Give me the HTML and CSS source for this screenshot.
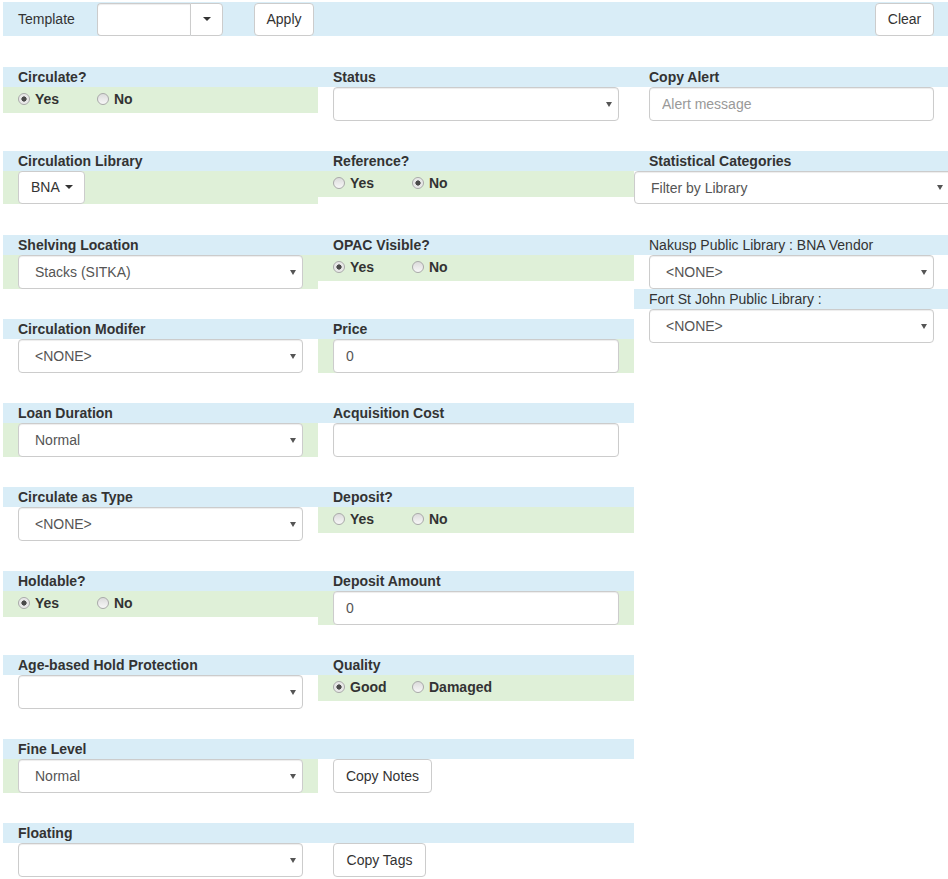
FILE: index.html
```html
<!DOCTYPE html>
<html lang="en">
<head>
<meta charset="utf-8">
<title>Item Attributes</title>
<link rel="stylesheet" href="styles.css">
</head>
<body>
<div class="page">
  <div class="toolbar">
    <span class="tpl-label">Template</span>
    <div class="input-group">
      <input class="ig-input" type="text">
      <button class="ig-btn" type="button"><span class="caret"></span></button>
    </div>
    <button class="btn btn-apply" type="button">Apply</button>
    <button class="btn btn-clear" type="button">Clear</button>
  </div>

  <div class="form">
    <div class="main">
      <div class="row">
        <div class="field">
          <div class="head">Circulate?</div>
          <div class="radios changed">
            <label class="opt"><input type="radio" name="circ" checked>Yes</label>
            <label class="opt"><input type="radio" name="circ">No</label>
          </div>
        </div>
        <div class="field">
          <div class="head">Status</div>
          <div class="body"><div class="select"><select><option></option></select></div></div>
        </div>
      </div>

      <div class="row">
        <div class="field">
          <div class="head">Circulation Library</div>
          <div class="body changed"><button class="btn btn-lib" type="button">BNA <span class="caret"></span></button></div>
        </div>
        <div class="field">
          <div class="head">Reference?</div>
          <div class="radios changed">
            <label class="opt"><input type="radio" name="ref">Yes</label>
            <label class="opt"><input type="radio" name="ref" checked>No</label>
          </div>
        </div>
      </div>

      <div class="row">
        <div class="field">
          <div class="head">Shelving Location</div>
          <div class="body changed"><div class="select"><select><option>Stacks (SITKA)</option></select></div></div>
        </div>
        <div class="field">
          <div class="head">OPAC Visible?</div>
          <div class="radios changed">
            <label class="opt"><input type="radio" name="opac" checked>Yes</label>
            <label class="opt"><input type="radio" name="opac">No</label>
          </div>
        </div>
      </div>

      <div class="row">
        <div class="field">
          <div class="head">Circulation Modifer</div>
          <div class="body"><div class="select"><select><option>&lt;NONE&gt;</option></select></div></div>
        </div>
        <div class="field">
          <div class="head">Price</div>
          <div class="body changed"><input class="text" type="text" value="0"></div>
        </div>
      </div>

      <div class="row">
        <div class="field">
          <div class="head">Loan Duration</div>
          <div class="body changed"><div class="select"><select><option>Normal</option></select></div></div>
        </div>
        <div class="field">
          <div class="head">Acquisition Cost</div>
          <div class="body"><input class="text" type="text" value=""></div>
        </div>
      </div>

      <div class="row">
        <div class="field">
          <div class="head">Circulate as Type</div>
          <div class="body"><div class="select"><select><option>&lt;NONE&gt;</option></select></div></div>
        </div>
        <div class="field">
          <div class="head">Deposit?</div>
          <div class="radios changed">
            <label class="opt"><input type="radio" name="dep">Yes</label>
            <label class="opt"><input type="radio" name="dep">No</label>
          </div>
        </div>
      </div>

      <div class="row">
        <div class="field">
          <div class="head">Holdable?</div>
          <div class="radios changed">
            <label class="opt"><input type="radio" name="hold" checked>Yes</label>
            <label class="opt"><input type="radio" name="hold">No</label>
          </div>
        </div>
        <div class="field">
          <div class="head">Deposit Amount</div>
          <div class="body changed"><input class="text" type="text" value="0"></div>
        </div>
      </div>

      <div class="row">
        <div class="field">
          <div class="head">Age-based Hold Protection</div>
          <div class="body"><div class="select"><select><option></option></select></div></div>
        </div>
        <div class="field">
          <div class="head">Quality</div>
          <div class="radios changed">
            <label class="opt"><input type="radio" name="qual" checked>Good</label>
            <label class="opt"><input type="radio" name="qual">Damaged</label>
          </div>
        </div>
      </div>

      <div class="row">
        <div class="field">
          <div class="head">Fine Level</div>
          <div class="body changed"><div class="select"><select><option>Normal</option></select></div></div>
        </div>
        <div class="field">
          <div class="head"></div>
          <div class="body"><button class="btn btn-notes" type="button">Copy Notes</button></div>
        </div>
      </div>

      <div class="row">
        <div class="field">
          <div class="head">Floating</div>
          <div class="body"><div class="select"><select><option></option></select></div></div>
        </div>
        <div class="field">
          <div class="head"></div>
          <div class="body"><button class="btn btn-tags" type="button">Copy Tags</button></div>
        </div>
      </div>
    </div>

    <div class="side">
      <div class="field side-block">
        <div class="head">Copy Alert</div>
        <div class="body"><input class="text" type="text" placeholder="Alert message"></div>
      </div>
      <div class="field side-block">
        <div class="head">Statistical Categories</div>
        <div class="body-flush"><div class="select select-wide"><select><option>Filter by Library</option></select></div></div>
      </div>
      <div class="field">
        <div class="head head-plain">Nakusp Public Library : BNA Vendor</div>
        <div class="body"><div class="select"><select><option>&lt;NONE&gt;</option></select></div></div>
      </div>
      <div class="field">
        <div class="head head-plain">Fort St John Public Library :</div>
        <div class="body"><div class="select"><select><option>&lt;NONE&gt;</option></select></div></div>
      </div>
    </div>
  </div>
</div>
</body>
</html>
```

FILE: styles.css
```css
html, body {
  margin: 0;
  padding: 0;
}
body {
  font-family: "Liberation Sans", Arial, Helvetica, sans-serif;
  font-size: 14px;
  color: #333;
  background: #fff;
  overflow: hidden;
}
* { box-sizing: border-box; }

.page {
  padding: 2px 0 0 3px;
  width: 949px;
}

/* toolbar */
.toolbar {
  display: flex;
  align-items: center;
  width: 945px;
  height: 34px;
  background: #d9edf7;
  padding: 0 14px 0 15px;
  margin-bottom: 31px;
}
.tpl-label {
  width: 79px;
  line-height: 20px;
}
.input-group {
  display: flex;
  height: 33px;
}
.ig-input {
  width: 93px;
  height: 33px;
  border: 1px solid #ccc;
  border-right: 0;
  border-radius: 4px 0 0 4px;
  box-shadow: inset 0 1px 1px rgba(0,0,0,.075);
  margin: 0;
  padding: 0 12px;
  font: inherit;
}
.ig-btn {
  width: 33px;
  height: 33px;
  border: 1px solid #ccc;
  border-radius: 0 4px 4px 0;
  background: #fff;
  margin: 0;
  padding: 0;
  display: flex;
  align-items: center;
  justify-content: center;
}
.caret {
  display: inline-block;
  width: 0;
  height: 0;
  border-top: 4px solid #333;
  border-left: 4px solid transparent;
  border-right: 4px solid transparent;
  vertical-align: middle;
}

.btn {
  height: 34px;
  border: 1px solid #ccc;
  border-radius: 4px;
  background: #fff;
  color: #333;
  font: inherit;
  font-size: 14px;
  padding: 0 12px;
  margin: 0;
  line-height: 32px;
  white-space: nowrap;
}
.toolbar .btn { height: 33px; line-height: 31px; }
.btn-apply { margin-left: 31px; width: 60px; padding: 0; }
.btn-clear { margin-left: auto; width: 59px; padding: 0; }
.btn-lib { width: 67px; height: 33px; line-height: 31px; padding: 0 0 0 12px; text-align: left; }
.btn-lib .caret { margin-left: 2px; margin-top: -2px; }
.btn-notes { width: 99px; padding: 0; }
.btn-tags { width: 93px; padding: 0; }

/* form */
.form {
  display: flex;
  align-items: flex-start;
}
.main { width: 631px; }
.row {
  display: grid;
  grid-template-columns: 315px 316px;
  align-items: start;
  min-height: 54px;
  margin-bottom: 30px;
}
.side { width: 315px; }
.side-block { min-height: 54px; margin-bottom: 30px; }

.head {
  height: 20px;
  line-height: 20px;
  padding: 0 15px;
  background: #d9edf7;
  font-weight: bold;
  white-space: nowrap;
}
.head-plain { font-weight: normal; }

.body { padding: 0 15px; }
.body-flush { padding: 0; }
.changed { background: #dff0d8; }

.radios {
  height: 26px;
  padding: 2px 15px 0;
  display: flex;
}
.opt {
  display: inline-flex;
  align-items: center;
  width: 79px;
  height: 20px;
  font-weight: bold;
  line-height: 20px;
}
.opt input {
  appearance: none;
  -webkit-appearance: none;
  width: 12px;
  height: 12px;
  margin: 0 5px 0 0;
  border: 1px solid #a9a9a9;
  border-radius: 50%;
  background: linear-gradient(#dcdcdc, #f7f7f7);
  flex: none;
}
.opt input:checked {
  background: radial-gradient(circle, #4a4a4a 0, #4a4a4a 2.3px, #e4e4e4 2.9px, #f3f3f3 100%);
}

.select { position: relative; }
.select select {
  appearance: none;
  -webkit-appearance: none;
  display: block;
  width: 100%;
  height: 34px;
  margin: 0;
  border: 1px solid #ccc;
  border-radius: 4px;
  background: #fff;
  box-shadow: inset 0 1px 1px rgba(0,0,0,.075);
  padding: 0 16px;
  font: inherit;
  font-size: 14px;
  color: #555;
}
.select::after {
  content: "";
  position: absolute;
  right: 7px;
  top: 15px;
  width: 0;
  height: 0;
  border-top: 5px solid #555;
  border-left: 3px solid transparent;
  border-right: 3px solid transparent;
  pointer-events: none;
}
.select-wide { width: 318px; }
.select-wide select { height: 33px; }
.select-wide::after { right: 9px; top: 14px; }

.text {
  display: block;
  width: 100%;
  height: 34px;
  margin: 0;
  border: 1px solid #ccc;
  border-radius: 4px;
  box-shadow: inset 0 1px 1px rgba(0,0,0,.075);
  padding: 0 12px;
  font: inherit;
  font-size: 14px;
  color: #555;
  background: #fff;
}
.text::placeholder { color: #999; }
```
